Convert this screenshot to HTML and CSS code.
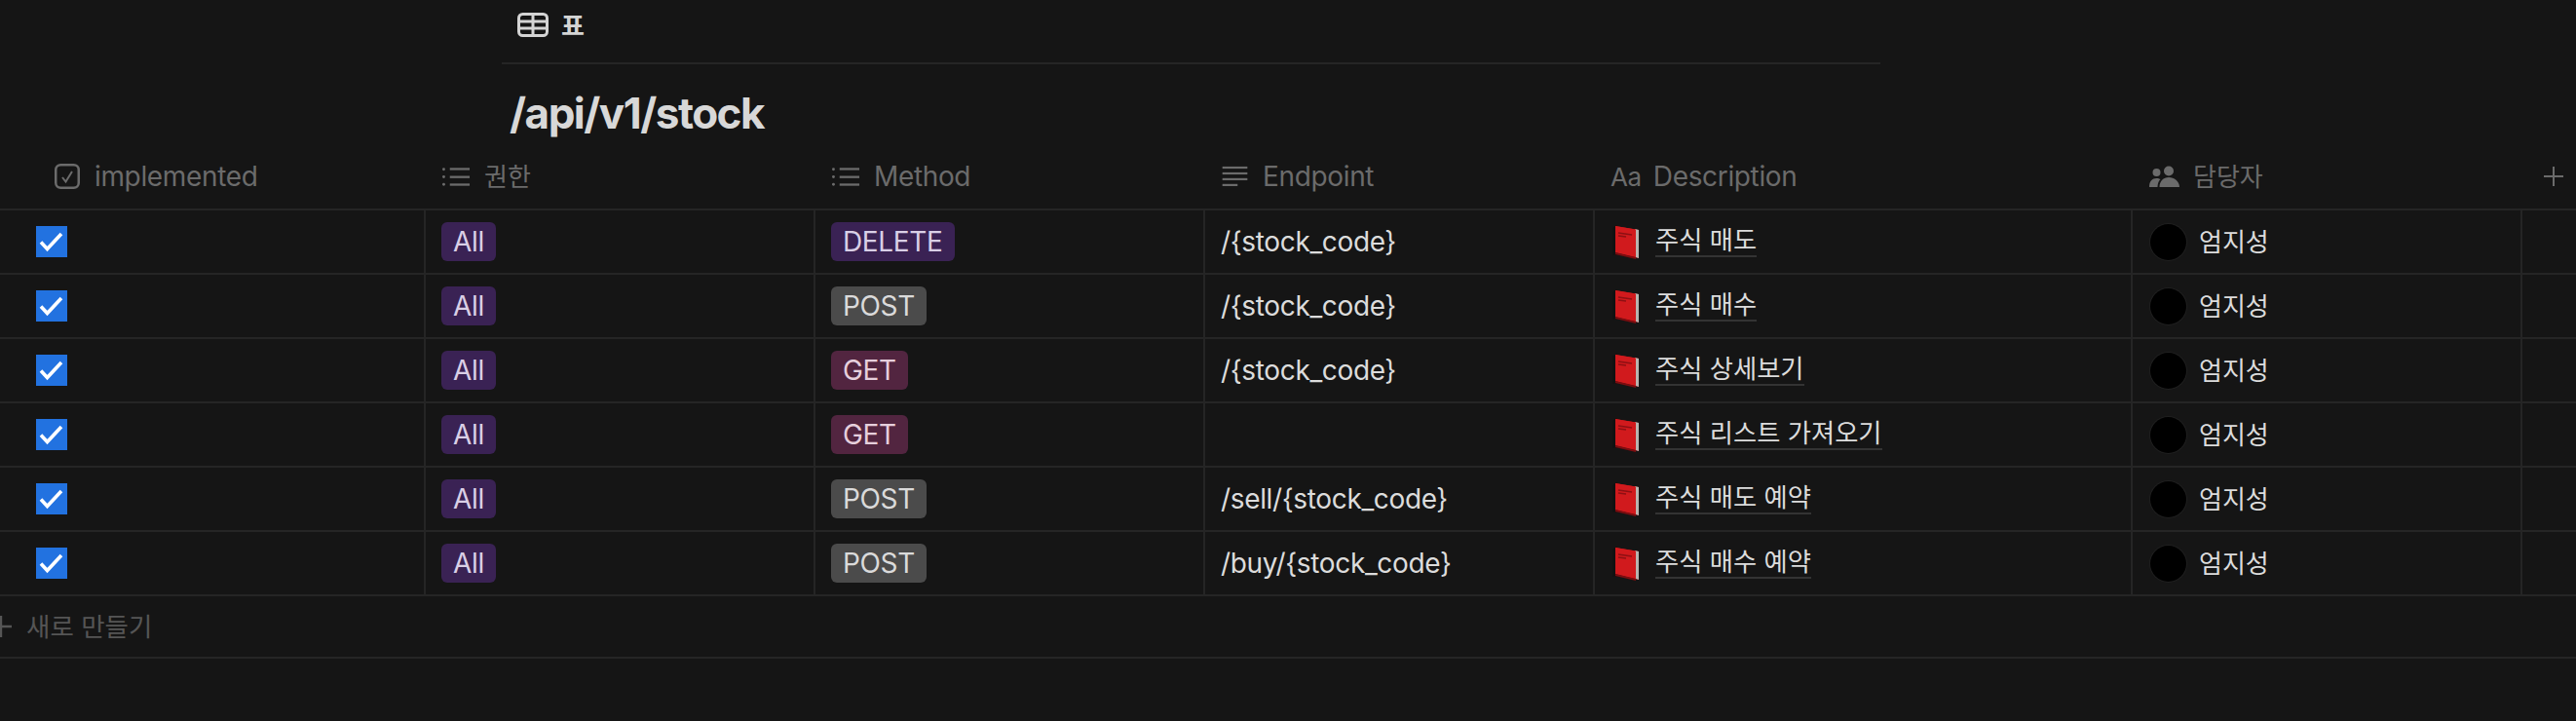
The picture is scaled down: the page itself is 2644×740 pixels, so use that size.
FILE: index.html
```html
<!DOCTYPE html>
<html lang="ko">
<head>
<meta charset="utf-8">
<title>/api/v1/stock</title>
<link rel="stylesheet" href="styles.css">
</head>
<body>
<svg class="defs" width="0" height="0" aria-hidden="true">
  <symbol id="list" viewBox="0 0 30 20">
    <g fill="currentColor">
      <rect x="0" y="1" width="3" height="3" rx="1.5"/><rect x="0" y="9" width="3" height="3" rx="1.5"/><rect x="0" y="17" width="3" height="3" rx="1.5"/>
      <rect x="8" y="1" width="21" height="2.400"/><rect x="8" y="9.500" width="21" height="2.400"/><rect x="8" y="17.600" width="21" height="2.400"/>
    </g>
  </symbol>
  <symbol id="book" viewBox="0 0 28 35">
    <path d="M3 1 L5 0 L5 30 L3 31 Z" fill="#2a0606"/>
    <path d="M0 3 L3 1 L3 30 L0 31 Z" fill="#111"/>
    <path d="M3 1 L27 5 L27 34 L3 28 Z" fill="#c9151a"/>
    <path d="M23 4 L27 5 L27 34 L24 33 Z" fill="#b8b4b0"/>
    <path d="M3 1 L24 4.500 L24 33 L3 28 Z" fill="#d11a1d"/>
    <path d="M6 8 L20 10 M6 11 L14 12" stroke="#8e1013" stroke-width="1.400"/>
    <path d="M3 28 L24 33 L24 35 L3 30 Z" fill="#7d0d10"/>
  </symbol>
</svg>

<div class="tabs">
  <svg class="tab-icon" viewBox="0 0 32 25" fill="none" stroke="currentColor" stroke-width="3"><rect x="1.500" y="1.500" width="29" height="22" rx="4"/><path d="M1.500 9h29M1.500 16h29M16 1.500v22"/></svg>
  <span class="tab-label">표</span>
</div>
<h1 class="title">/api/v1/stock</h1>

<div class="table">
  <div class="row head">
    <div class="hcell first">
      <svg class="hicon check-icon" viewBox="0 0 26 26" fill="none" stroke="currentColor"><rect x="1.250" y="1.250" width="23.500" height="23.500" rx="5" stroke-width="2.500"/><path d="M8 14l3.500 4.500L18 8" stroke-width="2"/></svg>
      <span>implemented</span>
    </div>
    <div class="hcell"><svg class="hicon list-icon"><use href="#list"/></svg><span class="ko">권한</span></div>
    <div class="hcell"><svg class="hicon list-icon"><use href="#list"/></svg><span>Method</span></div>
    <div class="hcell">
      <svg class="hicon list-icon" viewBox="0 0 28 24" fill="currentColor"><rect width="28" height="2.400" y="1"/><rect width="28" height="2.400" y="7.500"/><rect width="28" height="2.400" y="14"/><rect width="17" height="2.400" y="20.500"/></svg>
      <span>Endpoint</span>
    </div>
    <div class="hcell"><span class="aa">Aa</span><span>Description</span></div>
    <div class="hcell">
      <svg class="hicon people-icon" viewBox="0 0 31 22" fill="currentColor"><circle cx="7.500" cy="7" r="4"/><circle cx="20" cy="5.500" r="5"/><path d="M0 22c0-6 3-9 7.500-9 1.600 0 3 .4 4 1.100C9.500 16 8.500 19 8.500 22zM10.500 22c0-6 4-10 9.500-10s11 4 11 10z"/></svg>
      <span class="ko">담당자</span>
    </div>
    <div class="hcell add"><svg class="plus" viewBox="0 0 20 20" stroke="currentColor" stroke-width="2"><path d="M10 0v20M0 10h20"/></svg></div>
  </div>

  <div class="row">
    <div class="cell first"><span class="checkbox"><svg viewBox="0 0 32 32" fill="none" stroke="#fff" stroke-width="3.600"><path d="M5 16.500l6.500 7L26 8"/></svg></span></div>
    <div class="cell"><span class="tag purple">All</span></div>
    <div class="cell"><span class="tag purple">DELETE</span></div>
    <div class="cell">/{stock_code}</div>
    <div class="cell"><svg class="book"><use href="#book"/></svg><span class="link">주식 매도</span></div>
    <div class="cell"><span class="avatar"></span><span class="ko">엄지성</span></div>
    <div class="cell"></div>
  </div>
  <div class="row">
    <div class="cell first"><span class="checkbox"><svg viewBox="0 0 32 32" fill="none" stroke="#fff" stroke-width="3.600"><path d="M5 16.500l6.500 7L26 8"/></svg></span></div>
    <div class="cell"><span class="tag purple">All</span></div>
    <div class="cell"><span class="tag gray">POST</span></div>
    <div class="cell">/{stock_code}</div>
    <div class="cell"><svg class="book"><use href="#book"/></svg><span class="link">주식 매수</span></div>
    <div class="cell"><span class="avatar"></span><span class="ko">엄지성</span></div>
    <div class="cell"></div>
  </div>
  <div class="row">
    <div class="cell first"><span class="checkbox"><svg viewBox="0 0 32 32" fill="none" stroke="#fff" stroke-width="3.600"><path d="M5 16.500l6.500 7L26 8"/></svg></span></div>
    <div class="cell"><span class="tag purple">All</span></div>
    <div class="cell"><span class="tag pink">GET</span></div>
    <div class="cell">/{stock_code}</div>
    <div class="cell"><svg class="book"><use href="#book"/></svg><span class="link">주식 상세보기</span></div>
    <div class="cell"><span class="avatar"></span><span class="ko">엄지성</span></div>
    <div class="cell"></div>
  </div>
  <div class="row">
    <div class="cell first"><span class="checkbox"><svg viewBox="0 0 32 32" fill="none" stroke="#fff" stroke-width="3.600"><path d="M5 16.500l6.500 7L26 8"/></svg></span></div>
    <div class="cell"><span class="tag purple">All</span></div>
    <div class="cell"><span class="tag pink">GET</span></div>
    <div class="cell"></div>
    <div class="cell"><svg class="book"><use href="#book"/></svg><span class="link">주식 리스트 가져오기</span></div>
    <div class="cell"><span class="avatar"></span><span class="ko">엄지성</span></div>
    <div class="cell"></div>
  </div>
  <div class="row">
    <div class="cell first"><span class="checkbox"><svg viewBox="0 0 32 32" fill="none" stroke="#fff" stroke-width="3.600"><path d="M5 16.500l6.500 7L26 8"/></svg></span></div>
    <div class="cell"><span class="tag purple">All</span></div>
    <div class="cell"><span class="tag gray">POST</span></div>
    <div class="cell">/sell/{stock_code}</div>
    <div class="cell"><svg class="book"><use href="#book"/></svg><span class="link">주식 매도 예약</span></div>
    <div class="cell"><span class="avatar"></span><span class="ko">엄지성</span></div>
    <div class="cell"></div>
  </div>
  <div class="row">
    <div class="cell first"><span class="checkbox"><svg viewBox="0 0 32 32" fill="none" stroke="#fff" stroke-width="3.600"><path d="M5 16.500l6.500 7L26 8"/></svg></span></div>
    <div class="cell"><span class="tag purple">All</span></div>
    <div class="cell"><span class="tag gray">POST</span></div>
    <div class="cell">/buy/{stock_code}</div>
    <div class="cell"><svg class="book"><use href="#book"/></svg><span class="link">주식 매수 예약</span></div>
    <div class="cell"><span class="avatar"></span><span class="ko">엄지성</span></div>
    <div class="cell"></div>
  </div>

  <div class="new-row">
    <svg class="new-plus" viewBox="0 0 12 22" stroke="currentColor" stroke-width="2.400"><path d="M1 0v22M0 11h12"/></svg>
    <span class="ko new-label">새로 만들기</span>
  </div>
</div>
</body>
</html>
```

FILE: styles.css
```css
* { box-sizing: border-box; }

html, body {
  margin: 0;
  height: 100%;
  background: #151515;
  overflow: hidden;
}

body {
  font-family: Inter, "Noto Sans CJK KR", sans-serif;
  font-size: 28px;
  letter-spacing: -0.35px;
  color: #dcdcdc;
}

.defs { position: absolute; }

.tabs {
  display: flex;
  align-items: center;
  gap: 13px;
  height: 66px;
  width: 1415px;
  margin-left: 515px;
  padding: 0 0 2px 16px;
  border-bottom: 2px solid #252525;
  color: #d4d4d4;
}

.tab-icon { width: 32px; height: 25px; margin-top: -12px; }

.tab-label {
  font-size: 26px;
  font-weight: 600;
  letter-spacing: 0;
  margin-top: -14px;
}

.title {
  margin: 0 0 0 523px;
  height: 84px;
  padding-top: 24px;
  font-size: 44px;
  line-height: 52px;
  font-weight: 700;
  letter-spacing: -1.5px;
  color: #d8d8d8;
}

.row {
  display: grid;
  grid-template-columns: 435px 400px 400px 400px 552px 400px 57px;
  height: 66px;
  border-bottom: 2px solid #252525;
}

.head { color: #6b6b6b; padding-bottom: 2px; }

.hcell {
  display: flex;
  align-items: center;
  padding-left: 19px;
  gap: 14px;
  white-space: nowrap;
}

.hcell:nth-child(4), .hcell:nth-child(5) { padding-left: 18px; }
.hcell.first { padding-left: 56px; gap: 15px; }
.hcell.add { padding-left: 24px; }

.hicon { flex: none; color: #6b6b6b; }
.check-icon { width: 26px; height: 26px; }
.list-icon { width: 29px; height: 22px; }
.people-icon { width: 31px; height: 22px; }
.plus { width: 20px; height: 20px; color: #6b6b6b; }

.aa { font-size: 26px; margin-right: -2px; }

.cell {
  display: flex;
  align-items: center;
  padding-left: 16px;
  border-left: 2px solid #252525;
  white-space: nowrap;
}

.cell.first { border-left: 0; padding-left: 37px; }

.checkbox {
  display: block;
  width: 32px;
  height: 32px;
  background: #2272e0;
}

.checkbox svg { display: block; width: 32px; height: 32px; }

.tag {
  display: block;
  height: 40px;
  padding: 0 12px;
  line-height: 40px;
  border-radius: 6px;
}

.purple { background: #3a2254; color: #d9cfe6; }
.gray { background: #4b4b4b; color: #dadada; }
.pink { background: #522540; color: #e6cfdc; }

.book { width: 28px; height: 35px; flex: none; margin-left: 2px; margin-right: 16px; }

.ko {
  font-size: 26px;
  letter-spacing: 0;
  margin-bottom: 3px;
}

.link {
  font-size: 26.3px;
  letter-spacing: 0;
  line-height: 30px;
  border-bottom: 2px solid #333;
}

.avatar {
  flex: none;
  width: 37px;
  height: 37px;
  margin-left: 2px;
  margin-right: 13px;
  border-radius: 50%;
  background: #000;
  box-shadow: 0 0 0 1px #1f1f1f;
}

.new-row {
  display: flex;
  align-items: center;
  gap: 15px;
  height: 64px;
  border-bottom: 2px solid #252525;
  color: #555;
}

.new-plus { width: 12px; height: 22px; flex: none; }
.new-label { font-size: 26.5px; }
```
